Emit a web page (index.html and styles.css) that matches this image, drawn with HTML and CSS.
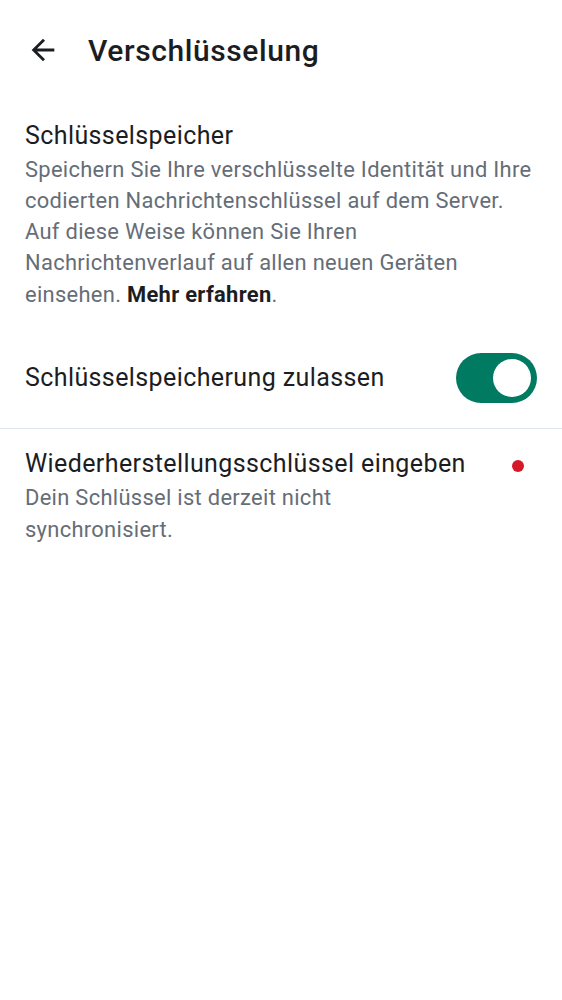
FILE: index.html
```html
<!DOCTYPE html>
<html lang="de">
<head>
<meta charset="utf-8">
<link rel="stylesheet" href="styles.css">
</head>
<body>
<div class="screen">
  <header class="topbar">
    <button class="back" aria-label="Zurück">
      <svg width="34" height="34" viewBox="0 0 24 24"><path d="M20 11H7.83l5.59-5.59L12 4l-8 8 8 8 1.41-1.41L7.83 13H20v-2z" fill="#1b1d22"/></svg>
    </button>
    <h1 class="title">Verschlüsselung</h1>
  </header>

  <section class="intro">
    <div class="item-title">Schlüsselspeicher</div>
    <p class="item-desc">Speichern Sie Ihre verschlüsselte Identität und Ihre<br>codierten Nachrichtenschlüssel auf dem Server.<br>Auf diese Weise können Sie Ihren<br>Nachrichtenverlauf auf allen neuen Geräten<br>einsehen. <b>Mehr erfahren</b>.</p>
  </section>

  <div class="row toggle-row">
    <div class="item-title">Schlüsselspeicherung zulassen</div>
    <div class="switch"><div class="thumb"></div></div>
  </div>

  <div class="divider"></div>

  <div class="row recovery">
    <div class="text">
      <div class="item-title">Wiederherstellungsschlüssel eingeben</div>
      <p class="item-desc">Dein Schlüssel ist derzeit nicht<br>synchronisiert.</p>
    </div>
    <div class="dot"></div>
  </div>
</div>
</body>
</html>
```

FILE: styles.css
```css
* { box-sizing: border-box; }
html, body { margin: 0; padding: 0; background: #ffffff; }
body {
  font-family: "Roboto", "Inter", sans-serif;
  color: #1b1d22;
  width: 562px;
}
.screen { display: flex; flex-direction: column; }
.topbar {
  display: flex;
  align-items: center;
  height: 100px;
  padding-left: 26px;
}
.back {
  border: 0;
  background: none;
  padding: 0;
  width: 34px;
  height: 34px;
  display: flex;
  margin-right: 28px;
}
.title {
  margin: 0;
  font-size: 30px;
  font-weight: 500;
  letter-spacing: 0.6px;
}
.intro { padding: 18.6px 25px 0 25px; }
.item-title {
  font-size: 25px;
  line-height: 34px;
  font-weight: 400;
  letter-spacing: 0.4px;
  color: #1b1d22;
}
.item-desc {
  margin: 1px 0 0 0;
  font-size: 21.9px;
  line-height: 31.3px;
  letter-spacing: 0.31px;
  color: #656d77;
}
.item-desc b { color: #1b1d22; font-weight: 700; }
.row {
  display: flex;
  align-items: center;
  justify-content: space-between;
  padding: 0 25px;
}
.toggle-row { height: 100px; margin-top: 17.6px; }
.switch {
  width: 81px;
  height: 50px;
  border-radius: 25px;
  background: #007a61;
  display: flex;
  align-items: center;
  justify-content: flex-end;
  padding-right: 6px;
}
.thumb {
  width: 38px;
  height: 38px;
  border-radius: 50%;
  background: #ffffff;
}
.divider { height: 1px; background: #e1e6ec; }
.recovery {
  align-items: flex-start;
  padding-top: 18.6px;
}
.dot {
  width: 12px;
  height: 12px;
  border-radius: 50%;
  background: #d51928;
  margin-top: 12.4px;
  margin-right: 13px;
}
```
